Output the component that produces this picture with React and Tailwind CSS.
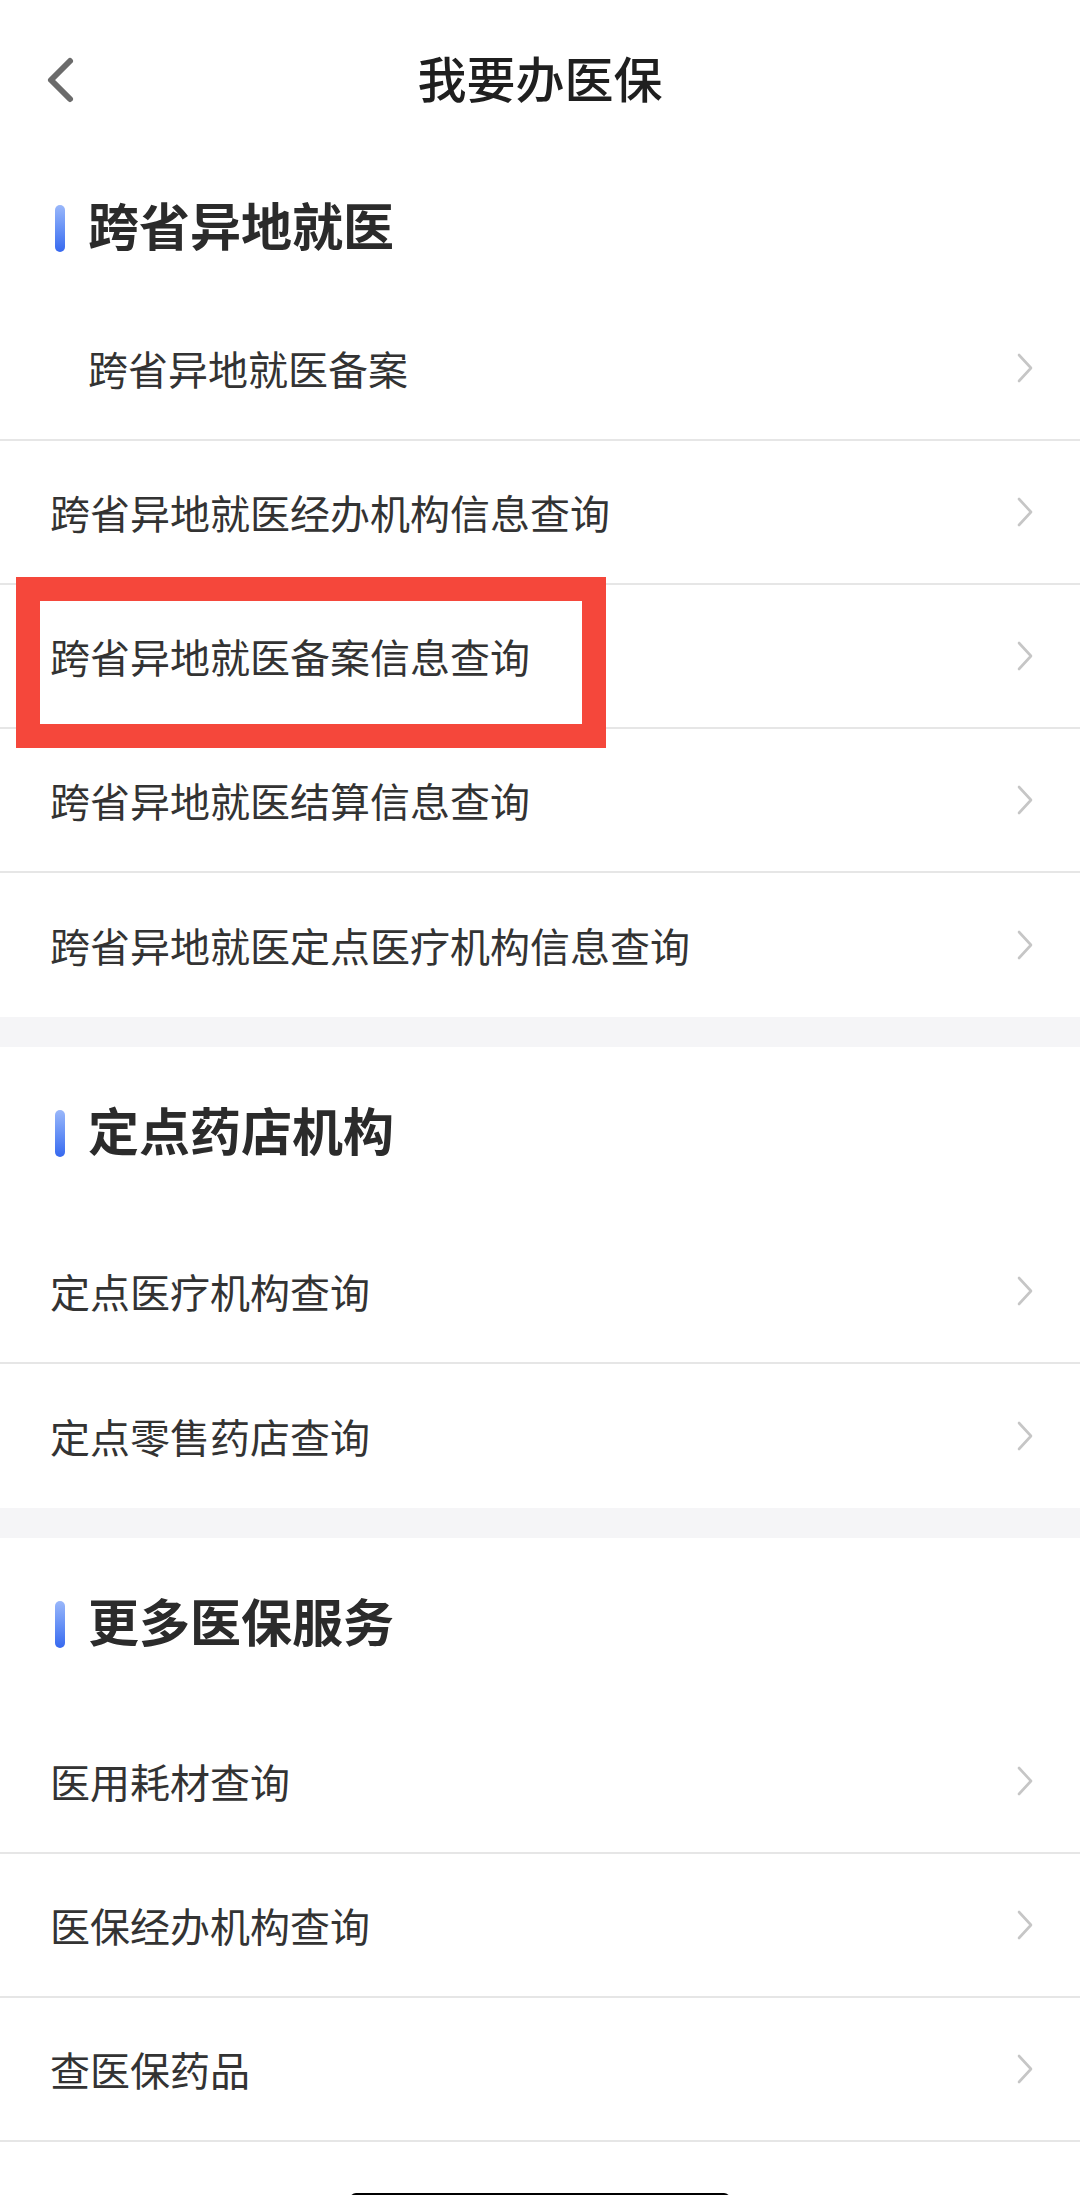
import React from 'react';

const sections = [
    {
        title: '跨省异地就医',
        headerHeight: 'h-[137px]',
        items: [
            { label: '跨省异地就医备案', indent: true },
            { label: '跨省异地就医经办机构信息查询' },
            { label: '跨省异地就医备案信息查询' },
            { label: '跨省异地就医结算信息查询' },
            { label: '跨省异地就医定点医疗机构信息查询', last: true },
        ],
    },
    {
        title: '定点药店机构',
        headerHeight: 'h-[173px]',
        items: [
            { label: '定点医疗机构查询' },
            { label: '定点零售药店查询', last: true },
        ],
    },
    {
        title: '更多医保服务',
        headerHeight: 'h-[172px]',
        items: [
            { label: '医用耗材查询' },
            { label: '医保经办机构查询' },
            { label: '查医保药品' },
        ],
    },
];

function BackIcon() {
    return (
        <svg width="34" height="48" viewBox="0 0 34 48" fill="none">
            <path d="M26 5 L7 24 L26 43" stroke="#6b6b6b" strokeWidth="6" strokeLinecap="round" strokeLinejoin="round" />
        </svg>
    );
}

function ChevronRight() {
    return (
        <svg width="18" height="30" viewBox="0 0 18 30" fill="none">
            <path d="M3 2 L15 15 L3 28" stroke="#c6c6c6" strokeWidth="2.6" strokeLinecap="round" strokeLinejoin="round" />
        </svg>
    );
}

function SectionHeader({ title, height }) {
    return (
        <div className={`${height} flex items-center pl-[55px]`}>
            <div className="w-[10px] h-[47px] rounded-full bg-gradient-to-b from-[#9ab7fa] to-[#3768ef]" />
            <span className="ml-[23px] pb-[8px] text-[51px] leading-none font-bold text-[#2b2b2b]">{title}</span>
        </div>
    );
}

function Row({ label, indent, last }) {
    return (
        <div
            className={
                'h-[144px] flex items-center justify-between pr-[46px] ' +
                (indent ? 'pl-[88px] ' : 'pl-[50px] ') +
                (last ? '' : 'border-b-2 border-[#e6e6e6]')
            }
        >
            <span className="text-[40px] leading-none text-[#333333]">{label}</span>
            <ChevronRight />
        </div>
    );
}

export default function App() {
    return (
        <div className="relative w-[1080px] h-[2195px] overflow-hidden bg-white font-['PingFang_SC','Noto_Sans_CJK_SC',sans-serif]">
            {/* nav bar */}
            <div className="h-[160px] grid grid-cols-[1fr_auto_1fr] items-center">
                <div className="pl-[44px] flex items-center">
                    <BackIcon />
                </div>
                <h1 className="pb-[8px] text-[49px] leading-none font-medium text-[#1f1f1f]">我要办医保</h1>
                <div />
            </div>

            {sections.map((section, i) => (
                <div key={section.title}>
                    {i > 0 && <div className="h-[30px] bg-[#f5f5f7]" />}
                    <SectionHeader title={section.title} height={section.headerHeight} />
                    {section.items.map(item => (
                        <Row key={item.label} {...item} />
                    ))}
                </div>
            ))}

            {/* home indicator */}
            <div className="mt-[51px] mx-auto w-[380px] h-[12px] rounded-full bg-black" />

            {/* red highlight annotation */}
            <div className="absolute left-[16px] top-[577px] w-[590px] h-[171px] border-[24px] border-[#f5473b]" />
        </div>
    );
}
